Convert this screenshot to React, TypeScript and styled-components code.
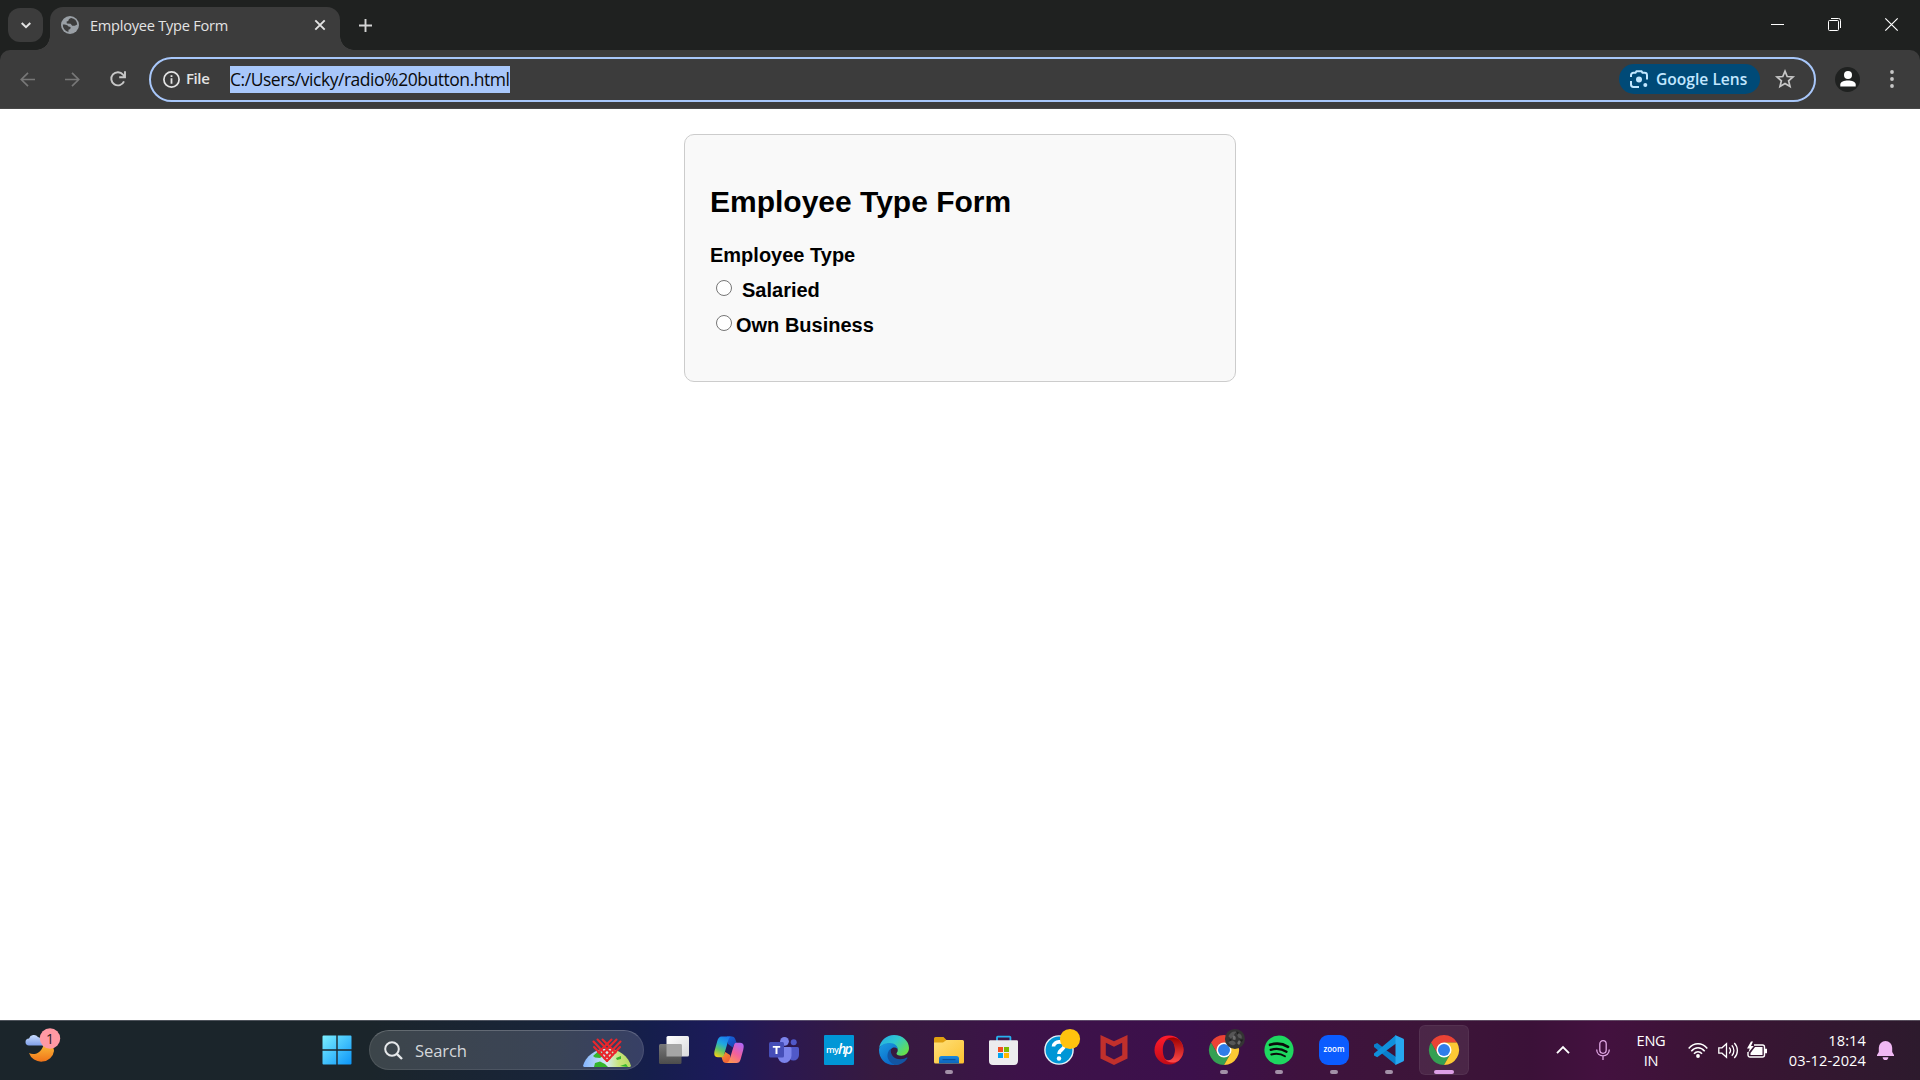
import React from "react";
import styled, { createGlobalStyle } from "styled-components";

const GlobalStyle = createGlobalStyle`
  * { box-sizing: border-box; }
  html, body { margin: 0; padding: 0; background: #fff; overflow: hidden; }
  svg { display: block; flex: none; overflow: visible; }
`;

const uiFont = `"Segoe UI", "Open Sans", "Noto Sans", sans-serif`;

const Screen = styled.div`
  width: 1920px;
  height: 1080px;
  display: flex;
  flex-direction: column;
  font-family: ${uiFont};
  overflow: hidden;
`;

/* ---------- Browser chrome ---------- */
const TabStrip = styled.div`
  height: 50px;
  flex: none;
  background: #1f2120;
  display: flex;
  align-items: flex-start;
  padding-left: 8px;
`;
const TabSearch = styled.div`
  width: 35px;
  height: 34px;
  margin-top: 8px;
  border-radius: 12px;
  background: #3c3c3c;
  display: flex;
  align-items: center;
  justify-content: center;
`;
const Tab = styled.div`
  position: relative;
  width: 290px;
  height: 43px;
  margin: 7px 0 0 7px;
  padding: 0 14px 7px 11px;
  border-radius: 13px 13px 0 0;
  background: #3c3c3c;
  display: flex;
  align-items: center;
  &::before, &::after {
    content: "";
    position: absolute;
    bottom: 0;
    width: 14px;
    height: 14px;
  }
  &::before {
    left: -14px;
    background: radial-gradient(circle at 0 0, transparent 13.5px, #3c3c3c 14px);
  }
  &::after {
    right: -14px;
    background: radial-gradient(circle at 100% 0, transparent 13.5px, #3c3c3c 14px);
  }
`;
const TabTitle = styled.span`
  flex: 1;
  margin-left: 11px;
  font-size: 14.6px;
  letter-spacing: -0.25px;
  color: #e3e3e3;
  white-space: nowrap;
`;
const NewTab = styled.div`
  width: 35px;
  height: 50px;
  margin-left: 8px;
  display: flex;
  align-items: center;
  justify-content: center;
`;
const WindowButtons = styled.div`
  display: flex;
  margin-left: auto;
`;
const WindowButton = styled.div`
  width: 57px;
  height: 49px;
  display: flex;
  align-items: center;
  justify-content: center;
`;
const ToolbarBack = styled.div`
  height: 59px;
  flex: none;
  background: #1f2120;
`;
const Toolbar = styled.div`
  height: 59px;
  padding: 7px 0 7px 5px;
  background: #3c3c3c;
  border-bottom: 1px solid #484848;
  border-radius: 10px 10px 0 0;
  display: flex;
  align-items: center;
`;
const ToolButton = styled.div<{ $w?: number }>`
  width: ${(p) => p.$w ?? 45}px;
  height: 44px;
  flex: none;
  display: flex;
  align-items: center;
  justify-content: center;
`;
const Omnibox = styled.div`
  width: 1667px;
  height: 45px;
  flex: none;
  margin-left: 9px;
  padding: 0 19px 0 12px;
  border: 2.5px solid #a8c7fa;
  border-radius: 23px;
  display: flex;
  align-items: center;
`;
const SchemeLabel = styled.span`
  margin: 0 0 2px 6px;
  width: 43px;
  font-size: 15px;
  font-weight: 600;
  letter-spacing: -0.4px;
  color: #e3e3e3;
`;
const Url = styled.span`
  height: 27px;
  width: 280px;
  margin-left: 1px;
  line-height: 27px;
  background: #a8c7fa;
  color: #0a0a0a;
  font-size: 17.5px;
  letter-spacing: -0.46px;
  white-space: nowrap;
`;
const LensChip = styled.div`
  width: 141px;
  height: 30px;
  margin-left: auto;
  padding-left: 11px;
  border-radius: 15px;
  background: #004a77;
  color: #c2e7ff;
  display: flex;
  align-items: center;
  gap: 8px;
  font-size: 15.6px;
  font-weight: 600;
  white-space: nowrap;
`;
const StarSlot = styled.div`
  margin-left: 15px;
`;
const Profile = styled.div`
  width: 25px;
  height: 25px;
  flex: none;
  margin-left: 19px;
  border-radius: 50%;
  background: #1f2120;
  display: flex;
  align-items: center;
  justify-content: center;
`;

/* ---------- Page ---------- */
const Page = styled.main`
  flex: 1;
  background: #fff;
  padding-top: 25px;
  font-family: Arial, "Liberation Sans", sans-serif;
  font-weight: 700;
  color: #000;
`;
const Card = styled.form`
  width: 552px;
  height: 248px;
  margin: 0 auto;
  padding: 49px 25px 0;
  border: 1px solid #ccc;
  border-radius: 10px;
  background: #f9f9f9;
`;
const Heading = styled.h2`
  margin: 0 0 18px;
  font-size: 30px;
  line-height: 35px;
`;
const GroupLabel = styled.div`
  height: 35px;
  line-height: 37px;
  font-size: 20px;
`;
const Option = styled.label<{ $gap: number }>`
  height: 35px;
  padding: 2px 0 0 6px;
  display: flex;
  align-items: center;
  gap: ${(p) => p.$gap}px;
  font-size: 20px;
`;
const Radio = styled.input`
  appearance: none;
  width: 16px;
  height: 16px;
  margin: 0 0 5px;
  border: 1px solid #767676;
  border-radius: 50%;
  background: #fff;
`;

/* ---------- Taskbar ---------- */
const Taskbar = styled.footer`
  height: 60px;
  flex: none;
  display: flex;
  align-items: center;
  padding-bottom: 1px;
  border-top: 1px solid rgba(130, 130, 140, 0.5);
  background: linear-gradient(90deg, #1b252b 0, #1b252b 370px, #18243a 560px, #151e4c 650px, #1c1a5a 720px,
    #2b1850 780px, #371a3f 880px, #381842 940px, #3d1249 1020px, #3c104b 1190px, #3e123e 1300px,
    #3c1538 1440px, #3b1138 1530px, #43113f 1600px, #3a1434 1720px, #2d1a2d 1920px) 0 0 / 1920px 100%;
`;
const WidgetButton = styled.div`
  width: 312px;
  flex: none;
  padding: 0 0 8px 25px;
`;
const TaskButton = styled.div<{ $active?: boolean }>`
  position: relative;
  width: 50px;
  height: 50px;
  flex: none;
  border-radius: 6px;
  display: flex;
  align-items: center;
  justify-content: center;
  background: ${(p) => (p.$active ? "rgba(255,255,255,0.08)" : "transparent")};
  box-shadow: ${(p) => (p.$active ? "inset 0 0 0 1px rgba(255,255,255,0.05)" : "none")};
`;
const Indicator = styled.span<{ $active?: boolean }>`
  position: absolute;
  bottom: 1px;
  left: 50%;
  transform: translateX(-50%);
  width: ${(p) => (p.$active ? 20 : 8)}px;
  height: 4px;
  border-radius: 2px;
  background: ${(p) => (p.$active ? "#dd9fe6" : "#a391a8")};
`;
const Apps = styled.div`
  display: flex;
  align-items: center;
  gap: 5px;
`;
const SearchBox = styled.div`
  width: 275px;
  height: 40px;
  flex: none;
  margin-left: 2px;
  padding: 0 12px 0 14px;
  border-radius: 20px;
  border: 1px solid rgba(255, 255, 255, 0.09);
  border-top-color: rgba(255, 255, 255, 0.2);
  background: rgba(255, 255, 255, 0.15);
  display: flex;
  align-items: center;
`;
const SearchText = styled.span`
  margin-left: 12px;
  flex: 1;
  font-size: 16.6px;
  letter-spacing: -0.1px;
  color: #d4d7da;
`;
const Tray = styled.div`
  margin-left: auto;
  display: flex;
  align-items: center;
  padding-right: 16px;
  color: #fff;
`;
const TraySlot = styled.div<{ $w: number }>`
  width: ${(p) => p.$w}px;
  display: flex;
  justify-content: center;
`;
const TrayText = styled.div<{ $w: number; $align: string; $track: number }>`
  width: ${(p) => p.$w}px;
  padding-bottom: 1px;
  text-align: ${(p) => p.$align};
  font-size: 14.6px;
  line-height: 20px;
  letter-spacing: ${(p) => p.$track}px;
  white-space: nowrap;
`;

/* ---------- Icons ---------- */
const Globe = () => (
  <svg width="18" height="18" viewBox="0 0 18 18">
    <circle cx="9" cy="9" r="9" fill="#9aa0a6" />
    <path d="M10.2 1.9 C8.4 2.5 7 3.7 7.4 5 L5.6 5.5 L5.8 7.6 L9.6 7.7 L11.2 9.7 L13.8 9.7 L16.2 8.4 A7.2 7.2 0 0 0 10.2 1.9Z M1.8 8.6 C3.8 8.5 6.8 9 7.5 10.5 L9.6 11 L9.3 13 L7.5 13.8 L7.4 16 A7.2 7.2 0 0 1 1.8 8.6Z" fill="#3c3c3c" />
  </svg>
);

const LensIcon = () => (
  <svg width="18" height="18" viewBox="0 0 18 18" fill="none" stroke="#c2e7ff" strokeWidth="2">
    <path d="M1 7 V5.2 A2.4 2.4 0 0 1 3.4 2.8 H5.5 L6.5 1.2 H11.5 L12.5 2.8 H14.6 A2.4 2.4 0 0 1 17 5.2 V9.5 M1 11 V14.6 A2.4 2.4 0 0 0 3.4 17 H9" />
    <circle cx="9" cy="9.6" r="3" fill="#c2e7ff" stroke="none" />
    <circle cx="15.3" cy="15" r="2" fill="#c2e7ff" stroke="none" />
  </svg>
);

const WeatherIcon = () => (
  <svg width="36" height="36" viewBox="0 0 36 36">
    <defs>
      <linearGradient id="moon" x1="0" y1="0" x2="0" y2="1"><stop offset="0" stopColor="#fcc43b" /><stop offset="1" stopColor="#f0741a" /></linearGradient>
      <linearGradient id="cloud" x1="0" y1="0" x2="0" y2="1"><stop offset="0" stopColor="#c8dcff" /><stop offset="1" stopColor="#7f9fe8" /></linearGradient>
    </defs>
    <path d="M4 25 C9 28 18 25 19 14 C26 15 29 19 29 23 A12.8 12 0 0 1 4 25Z" fill="url(#moon)" />
    <path d="M4 17.5 A3.5 3.5 0 0 1 4 10.5 A5.2 5.2 0 0 1 13 9 L20 12 V17.5Z" fill="url(#cloud)" />
    <circle cx="25" cy="10.5" r="10.2" fill="#ff99a4" />
    <text x="25" y="15.8" fontSize="14" textAnchor="middle" fill="#2b1b1f" fontFamily="Open Sans, sans-serif">1</text>
  </svg>
);

const WindowsIcon = () => (
  <svg width="30" height="30" viewBox="0 0 30 30">
    <defs><linearGradient id="win" x1="0" y1="0" x2="30" y2="30" gradientUnits="userSpaceOnUse"><stop offset="0" stopColor="#7df0ff" /><stop offset="1" stopColor="#0a94f8" /></linearGradient></defs>
    <path d="M.5 1.5 A1 1 0 0 1 1.5 .5 H14.3 V14.3 H.5Z M15.7 .5 H28.5 A1 1 0 0 1 29.5 1.5 V14.3 H15.7Z M.5 15.7 H14.3 V29.5 H1.5 A1 1 0 0 1 .5 28.5Z M15.7 15.7 H29.5 V28.5 A1 1 0 0 1 28.5 29.5 H15.7Z" fill="url(#win)" />
  </svg>
);

const HighlightArt = () => (
  <svg width="48" height="40" viewBox="0 0 48 40">
    <defs>
      <clipPath id="earth"><path d="M0 36 C2 27 12 18.5 24 18.5 S46 27 48 36 L47 37 H1Z" /></clipPath>
      <linearGradient id="sea" x1="0" x2="1" y1="0" y2="0"><stop offset="0" stopColor="#83b4ff" /><stop offset=".5" stopColor="#d4ecf0" /><stop offset=".75" stopColor="#c9e47a" /><stop offset="1" stopColor="#b5d862" /></linearGradient>
    </defs>
    <g clipPath="url(#earth)">
      <rect width="48" height="40" fill="url(#sea)" />
      <path d="M10 26 L15 21.5 L18 22 L20 26 L17 28 L12 27.5Z M11 37 L12 33 L17 31.5 L22 34 L25 37Z M33 28 L38 26 L38 29 L34 30Z M37 36 L43 34 L45 37Z" fill="#35b52b" />
    </g>
    <g stroke="#e9262c" strokeWidth="2.1" fill="none" strokeLinecap="round">
      <path d="M11 17 L24 31 M10.5 11.5 L26.5 28.5 M14.5 9.5 L29.5 25 M19.5 9.5 L32.5 22.5" />
      <path d="M37 17 L24 31 M37.5 11.5 L21.5 28.5 M33.5 9.5 L18.5 25 M28.5 9.5 L15.5 22.5" />
    </g>
  </svg>
);

const TaskViewIcon = () => (
  <svg width="30" height="30" viewBox="0 0 30 30">
    <defs>
      <linearGradient id="tv1" x1="0" y1="0" x2="1" y2="1"><stop offset="0" stopColor="#fff" /><stop offset="1" stopColor="#d9d9dc" /></linearGradient>
      <linearGradient id="tv2" x1="0" y1="0" x2="0" y2="1"><stop offset="0" stopColor="#797979" /><stop offset="1" stopColor="#4c4c4c" /></linearGradient>
    </defs>
    <rect x="7.5" y="1" width="22.5" height="20.5" rx="1.5" fill="url(#tv1)" />
    <rect x="0" y="9" width="22.5" height="20" rx="1.5" fill="url(#tv2)" />
    <rect x="7.5" y="9" width="15" height="12.5" fill="#a6a6a6" />
  </svg>
);

const CopilotIcon = () => (
  <svg width="30" height="30" viewBox="0 0 30 30">
    <defs>
      <linearGradient id="cpA" x1=".6" y1="0" x2=".2" y2="1"><stop offset="0" stopColor="#1a7df0" /><stop offset=".35" stopColor="#20a8e0" /><stop offset=".65" stopColor="#5cc56a" /><stop offset="1" stopColor="#f4cf16" /></linearGradient>
      <linearGradient id="cpB" x1=".8" y1="0" x2=".2" y2="1"><stop offset="0" stopColor="#b366f5" /><stop offset=".5" stopColor="#f2609c" /><stop offset="1" stopColor="#ff9a4c" /></linearGradient>
      <linearGradient id="cpC" x1="0" y1="0" x2="1" y2="1"><stop offset="0" stopColor="#1467e0" /><stop offset="1" stopColor="#1c3ca8" /></linearGradient>
      <linearGradient id="cpD" x1="0" y1="0" x2="1" y2="1"><stop offset="0" stopColor="#f5a030" /><stop offset="1" stopColor="#ef5138" /></linearGradient>
    </defs>
    <path d="M13 1.5 H18 C21 1.5 21.5 5 22.5 7.5 H25 C21 7.5 20 9 18.8 12.5 L14 9Z" fill="url(#cpC)" />
    <path d="M17 28 H12 C9 28 8.5 25 7.5 22 H5 C9 22 10 20 11.2 17 L16 20Z" fill="url(#cpD)" />
    <path d="M7.5 1.5 H18 C15.5 1.5 14.8 3.5 14 6.2 L10 20 C9.4 22 8.3 22.2 6.5 22.2 H4 C-.5 22.2 0 17.8 .8 15 L3.3 6 C4.2 3 5.4 1.5 7.5 1.5Z" fill="url(#cpA)" />
    <path d="M22.5 28 H12 C14.5 28 15.2 26 16 23.3 L20 10 C20.6 8 21.7 7.8 23.5 7.8 H26 C30.5 7.8 30 12 29.2 15 L26.7 24 C25.8 27 24.6 28 22.5 28Z" fill="url(#cpB)" />
  </svg>
);

const TeamsIcon = () => (
  <svg width="30" height="30" viewBox="0 0 30 30">
    <circle cx="24.7" cy="7.3" r="3" fill="#5059c9" />
    <path d="M19 12 H28.5 A1.5 1.5 0 0 1 30 13.5 V20 A5.5 5.5 0 0 1 19 20Z" fill="#5059c9" />
    <circle cx="15.5" cy="6.3" r="4.4" fill="#7b83eb" />
    <path d="M9 12 H21 A1.5 1.5 0 0 1 22.5 13.5 V20.5 A7 7.5 0 0 1 8.5 20.5Z" fill="#7b83eb" />
    <rect x="0" y="7" width="15" height="15.5" rx="1.5" fill="#464eb8" />
    <path d="M3.8 11 H11.2 V12.8 H8.5 V19 H6.5 V12.8 H3.8Z" fill="#fff" />
  </svg>
);

const HpIcon = () => (
  <svg width="30" height="30" viewBox="0 0 30 30">
    <rect width="30" height="30" rx="1" fill="#0096d6" />
    <text x="2" y="18.2" fontSize="9" fill="#fff" fontFamily="Open Sans, sans-serif" letterSpacing="-.6" fontWeight="600">my</text>
    <text x="14" y="19" fontSize="14" fill="#fff" fontFamily="Open Sans, sans-serif" fontStyle="italic" fontWeight="600" letterSpacing="-1.8">hp</text>
  </svg>
);

const EdgeIcon = () => (
  <svg width="30" height="30" viewBox="0 0 24 24">
    <defs>
      <linearGradient id="eg1" x1="0" y1="0" x2="1" y2=".7"><stop offset="0" stopColor="#22a7e8" /><stop offset=".5" stopColor="#30c8d0" /><stop offset="1" stopColor="#67df4a" /></linearGradient>
      <linearGradient id="eg2" x1="0" y1="0" x2=".6" y2="1"><stop offset="0" stopColor="#1b9de2" /><stop offset="1" stopColor="#0a68c8" /></linearGradient>
    </defs>
    <path d="M.1 10.5 C.8 4.5 6 0 12 0 C19 0 24 5 24 10.4 C24 14.3 21 16.6 17.8 16.6 C15 16.6 14 15.4 14 14.8 C14 14.3 15 13.8 15 12 C15 9.3 12 7 8.5 7 C4 7 .8 9 .1 10.5Z" fill="url(#eg1)" />
    <path d="M0 12 C0 8.5 4 6.3 8.5 6.3 C12.8 6.3 15 9 15 11.6 C14 10 12 9.6 10.6 10.4 C7 12.5 7 19 13 23.9 C5 24.6 0 19 0 12Z" fill="url(#eg2)" />
    <path d="M9.6 11 C8.6 15.6 12 19.4 17 19.4 C19.5 19.4 21 18.6 22.3 18 C22.8 17.8 23 18.1 22.7 18.5 C20.5 22 17 24 13 24 C8.5 22.5 6.6 19 6.8 16 C7 13.3 8.5 11.5 9.6 11Z" fill="#1355a3" />
  </svg>
);

const ExplorerIcon = () => (
  <svg width="30" height="30" viewBox="0 0 30 30">
    <defs>
      <linearGradient id="fold" x1="0" y1="0" x2="1" y2="1"><stop offset="0" stopColor="#ffe07a" /><stop offset="1" stopColor="#fcc12f" /></linearGradient>
      <linearGradient id="tray" x1="0" y1="0" x2="0" y2="1"><stop offset="0" stopColor="#1a8ae0" /><stop offset="1" stopColor="#0b62ba" /></linearGradient>
    </defs>
    <path d="M0 3.5 A1.5 1.5 0 0 1 1.5 2 H9.5 L12.5 5 H28.5 V12 H0Z" fill="#e0a010" />
    <path d="M0 7.5 H9 L12.5 5 H28.5 A1.5 1.5 0 0 1 30 6.5 V27 A1.5 1.5 0 0 1 28.5 28.5 H1.5 A1.5 1.5 0 0 1 0 27Z" fill="url(#fold)" />
    <path d="M5 28.5 V23.5 A2.5 2.5 0 0 1 7.5 21 H22.5 A2.5 2.5 0 0 1 25 23.5 V28.5Z" fill="url(#tray)" />
    <path d="M8.5 24.7 H21.5" stroke="#084b94" strokeWidth="1" />
  </svg>
);

const StoreIcon = () => (
  <svg width="30" height="30" viewBox="0 0 30 30">
    <path d="M8 6 V2.4 A.7 .7 0 0 1 8.7 1.7 H20.7 A.7 .7 0 0 1 21.4 2.4 V6" fill="none" stroke="#28b1ef" strokeWidth="1.8" />
    <path d="M0 6.5 A1.2 1.2 0 0 1 1.2 5.3 H27.8 A1.2 1.2 0 0 1 29 6.5 V26 A4 4 0 0 1 25 30 H4 A4 4 0 0 1 0 26Z" fill="#ececee" />
    <path d="M9 12 H14 V17 H9Z" fill="#f25022" /><path d="M15 12 H20 V17 H15Z" fill="#7fba00" />
    <path d="M9 18 H14 V23 H9Z" fill="#00a4ef" /><path d="M15 18 H20 V23 H15Z" fill="#ffb900" />
  </svg>
);

const HelpIcon = () => (
  <svg width="30" height="30" viewBox="0 0 30 30">
    <circle cx="15" cy="15" r="14.8" fill="#e9f3f8" />
    <circle cx="15" cy="15" r="13.4" fill="#0096d6" />
    <path d="M9.5 11.5 C9.5 6 20.5 5 20.5 10.5 C20.5 14.5 15 14.5 15 19" fill="none" stroke="#fff" strokeWidth="3.6" />
    <circle cx="15" cy="23.5" r="2.2" fill="#fff" />
    <circle cx="26" cy="4" r="10.1" fill="#ffc20e" />
  </svg>
);

const McAfeeIcon = () => (
  <svg width="30" height="30" viewBox="0 0 30 30">
    <path d="M1.5 0 L15 6.3 L28.5 0 V23.5 L15 30 L1.5 23.5Z M6.8 7.8 V20.3 L15 24.5 L23.2 20.3 V7.8 L15 11.8Z" fill="#c0302c" fillRule="evenodd" />
  </svg>
);

const OperaIcon = () => (
  <svg width="30" height="30" viewBox="0 0 30 30">
    <defs>
      <linearGradient id="op" x1="0" y1="0" x2="0" y2="1"><stop offset="0" stopColor="#ff1b2d" /><stop offset="1" stopColor="#c20b16" /></linearGradient>
      <linearGradient id="op2" x1="0" y1="0" x2="0" y2="1"><stop offset="0" stopColor="#9c0000" /><stop offset="1" stopColor="#ff4b4b" /></linearGradient>
    </defs>
    <path d="M15 .6 A14.5 14.4 0 1 0 15 29.4 A14.5 14.4 0 1 0 15 .6Z M15 4.2 C18.8 4.2 21 9 21 15 S18.8 25.8 15 25.8 S8.8 21 8.8 15 S11.2 4.2 15 4.2Z" fill="url(#op)" fillRule="evenodd" />
    <path d="M10.8 6.3 C13 2.5 19 1 24.7 4.3 A14.5 14.4 0 0 1 24.7 25.7 C19 29 13 27.5 10.8 23.7 C16 28 21 23 21 15 S16 2 10.8 6.3Z" fill="url(#op2)" />
  </svg>
);

const ChromeIcon = ({ avatar }: { avatar?: boolean }) => (
  <svg width="30" height="30" viewBox="0 0 48 48">
    <path d="M24 12 H44.8 A24 24 0 0 0 3.2 12 L13.6 30Z" fill="#ea4335" />
    <path d="M13.6 30 L3.2 12 A24 24 0 0 0 24 48 L34.4 30Z" fill="#34a053" />
    <path d="M34.4 30 L24 48 A24 24 0 0 0 44.8 12 H24Z" fill="#fcc934" />
    <circle cx="24" cy="24" r="12" fill="#fff" />
    <circle cx="24" cy="24" r="9.6" fill="#2f7de9" />
    {avatar && (
      <g>
        <circle cx="41.5" cy="6.2" r="16" fill="#343434" />
        <path d="M31 2 C34 -5 40 -7 44 -5 C40 -2 39 3 35 6Z M44 -2 C50 -4 54 1 52 6 L47 4Z M31 12 C35 7 40 8 43 13 C40 18 35 17 31 12Z" fill="#565656" />
        <path d="M38 1 C42 0 44 4 42 8 L38 7Z M47 9 C51 8 52 12 48 16 L45 13Z" fill="#6c6c6c" />
        <path d="M44 -6 L48 -4 L45 0Z M49 7 L55 7 L52 11Z M33 6 L37 8 L33 10Z" fill="#1f1f1f" />
      </g>
    )}
  </svg>
);

const SpotifyIcon = () => (
  <svg width="30" height="30" viewBox="0 0 30 30">
    <circle cx="15" cy="15" r="14.6" fill="#1ed760" />
    <g fill="none" stroke="#0a0a0a" strokeLinecap="round">
      <path d="M6 9.8 C12 8 19 8.7 24 11.8" strokeWidth="2.7" />
      <path d="M6.7 14.8 C12 13.3 18 14 22.5 16.7" strokeWidth="2.3" />
      <path d="M7.3 19.5 C12 18.3 17 18.8 21 21.2" strokeWidth="1.9" />
    </g>
  </svg>
);

const ZoomIcon = () => (
  <svg width="30" height="30" viewBox="0 0 30 30">
    <rect width="30" height="30" rx="9" fill="#0b5cff" />
    <text x="15" y="17.3" fontSize="8.2" textAnchor="middle" textLength="21" lengthAdjust="spacingAndGlyphs" fill="#fff" fontWeight="600" fontFamily="Open Sans, sans-serif">zoom</text>
  </svg>
);

const CodeIcon = () => (
  <svg width="30" height="30" viewBox="0 0 30 30">
    <path d="M22 0 L8.8 12.2 L3.2 8 L0 9.5 V12 L22 30 V22 L12 15 L22 7.8Z" fill="#0a7fcc" />
    <path d="M0 18.5 L22 .3 V8.5 L3.2 22.3 L0 20.6Z" fill="#1090dc" />
    <path d="M21.5 .2 L29 3.5 A1.6 1.6 0 0 1 30 5 V25 A1.6 1.6 0 0 1 29 26.5 L21.5 30Z" fill="#27a7f0" />
  </svg>
);

const apps: { icon: React.ReactNode; running?: boolean; active?: boolean }[] = [
  { icon: <TaskViewIcon /> },
  { icon: <CopilotIcon /> },
  { icon: <TeamsIcon /> },
  { icon: <HpIcon /> },
  { icon: <EdgeIcon /> },
  { icon: <ExplorerIcon />, running: true },
  { icon: <StoreIcon /> },
  { icon: <HelpIcon /> },
  { icon: <McAfeeIcon /> },
  { icon: <OperaIcon /> },
  { icon: <ChromeIcon avatar />, running: true },
  { icon: <SpotifyIcon />, running: true },
  { icon: <ZoomIcon />, running: true },
  { icon: <CodeIcon />, running: true },
  { icon: <ChromeIcon />, running: true, active: true },
];

const WinControls = () => (
  <WindowButtons>
    <WindowButton>
      <svg width="13" height="13" viewBox="0 0 13 13"><path d="M0 6.5 H13" stroke="#fff" /></svg>
    </WindowButton>
    <WindowButton>
      <svg width="13" height="13" viewBox="0 0 13 13" fill="none" stroke="#fff">
        <path d="M3 .5 H10.5 A2 2 0 0 1 12.5 2.5 V10" />
        <rect x=".5" y="2.5" width="10" height="10" rx="1" />
      </svg>
    </WindowButton>
    <WindowButton>
      <svg width="13" height="13" viewBox="0 0 13 13"><path d="M.3 .3 L12.7 12.7 M12.7 .3 L.3 12.7" stroke="#fff" strokeWidth="1.2" /></svg>
    </WindowButton>
  </WindowButtons>
);

export default function App() {
  return (
    <Screen>
      <GlobalStyle />
      <TabStrip>
        <TabSearch>
          <svg width="10" height="7" viewBox="0 0 10 7"><path d="M.7 1 L5 5.2 L9.3 1" fill="none" stroke="#e3e3e3" strokeWidth="2" /></svg>
        </TabSearch>
        <Tab>
          <Globe />
          <TabTitle>Employee Type Form</TabTitle>
          <svg width="12" height="12" viewBox="0 0 12 12"><path d="M1.3 1.3 L10.7 10.7 M10.7 1.3 L1.3 10.7" stroke="#e3e3e3" strokeWidth="1.9" /></svg>
        </Tab>
        <NewTab>
          <svg width="13" height="13" viewBox="0 0 13 13"><path d="M6.5 0 V13 M0 6.5 H13" stroke="#d4d4d4" strokeWidth="1.9" /></svg>
        </NewTab>
        <WinControls />
      </TabStrip>
      <ToolbarBack>
        <Toolbar>
          <ToolButton>
            <svg width="15" height="15" viewBox="0 0 15 15"><path d="M15 7.5 H1.5 M8 .8 L1.3 7.5 L8 14.2" fill="none" stroke="#777" strokeWidth="1.7" /></svg>
          </ToolButton>
          <ToolButton>
            <svg width="15" height="15" viewBox="0 0 15 15"><path d="M0 7.5 H13.5 M7 .8 L13.7 7.5 L7 14.2" fill="none" stroke="#777" strokeWidth="1.7" /></svg>
          </ToolButton>
          <ToolButton>
            <svg width="16" height="16" viewBox="0 0 16 16"><path d="M14 10.3 A6.6 6.6 0 1 1 13 3.6 L14.6 5.4 M15 .3 V6.2 H9.2" fill="none" stroke="#c7c7c7" strokeWidth="1.9" /></svg>
          </ToolButton>
          <Omnibox>
            <svg width="17" height="17" viewBox="0 0 17 17">
              <circle cx="8.5" cy="8.5" r="7.6" fill="none" stroke="#e3e3e3" strokeWidth="1.7" />
              <path d="M8.5 7.3 V12.8 M8.5 4.2 V6" stroke="#e3e3e3" strokeWidth="1.8" />
            </svg>
            <SchemeLabel>File</SchemeLabel>
            <Url>C:/Users/vicky/radio%20button.html</Url>
            <LensChip>
              <LensIcon />
              Google Lens
            </LensChip>
            <StarSlot>
              <svg width="20" height="20" viewBox="0 0 20 20"><path d="M10 2.2 L12.2 7.5 L18 8 L13.6 11.8 L15 17.4 L10 14.4 L5 17.4 L6.4 11.8 L2 8 L7.8 7.5Z" fill="none" stroke="#c7c7c7" strokeWidth="1.7" /></svg>
            </StarSlot>
          </Omnibox>
          <Profile>
            <svg width="16" height="16" viewBox="0 0 16 16" fill="#fff"><circle cx="8" cy="4" r="4" /><path d="M.3 15.5 V13.5 C.3 8.3 15.7 8.3 15.7 13.5 V15.5Z" /></svg>
          </Profile>
          <ToolButton $w={64}>
            <svg width="4" height="18" viewBox="0 0 4 18" fill="#c7c7c7"><circle cx="2" cy="2" r="1.9" /><circle cx="2" cy="9" r="1.9" /><circle cx="2" cy="16" r="1.9" /></svg>
          </ToolButton>
        </Toolbar>
      </ToolbarBack>

      <Page>
        <Card>
          <Heading>Employee Type Form</Heading>
          <GroupLabel>Employee Type</GroupLabel>
          <Option $gap={10}>
            <Radio type="radio" name="employeeType" />
            Salaried
          </Option>
          <Option $gap={4}>
            <Radio type="radio" name="employeeType" />
            Own Business
          </Option>
        </Card>
      </Page>

      <Taskbar>
        <WidgetButton><WeatherIcon /></WidgetButton>
        <Apps>
          <TaskButton><WindowsIcon /></TaskButton>
          <SearchBox>
            <svg width="19" height="19" viewBox="0 0 19 19" fill="none" stroke="#e6e8ea" strokeWidth="2"><circle cx="8" cy="8" r="6.8" /><path d="M12.8 12.8 L18 18" strokeWidth="2.4" /></svg>
            <SearchText>Search</SearchText>
            <HighlightArt />
          </SearchBox>
          {apps.map((app, i) => (
            <TaskButton key={i} $active={app.active}>
              {app.icon}
              {app.running && <Indicator $active={app.active} />}
            </TaskButton>
          ))}
        </Apps>
        <Tray>
          <TraySlot $w={40}>
            <svg width="14" height="8" viewBox="0 0 14 8"><path d="M1 7.2 L7 1.2 L13 7.2" fill="none" stroke="#fff" strokeWidth="1.9" /></svg>
          </TraySlot>
          <TraySlot $w={40}>
            <svg width="14" height="20" viewBox="0 0 14 20" fill="none" stroke="#dfa5e2" strokeWidth="1.3"><rect x="3.8" y=".7" width="6.4" height="12.6" rx="3.2" /><path d="M.7 9.5 C.7 18 13.3 18 13.3 9.5 M7 16 V20" /></svg>
          </TraySlot>
          <TrayText $w={56} $align="center" $track={-0.3}>ENG<br />IN</TrayText>
          <TraySlot $w={37}>
            <svg width="20" height="15" viewBox="0 0 20 15" fill="none" stroke="#fff" strokeWidth="1.5"><path d="M.7 5.5 C6 -.7 14 -.7 19.3 5.5 M3.3 8.2 C7.3 3.6 12.7 3.6 16.7 8.2 M6 10.8 C8.3 8 11.7 8 14 10.8" /><circle cx="10" cy="13" r="1.9" fill="#fff" stroke="none" /></svg>
          </TraySlot>
          <TraySlot $w={24}>
            <svg width="20" height="17" viewBox="0 0 20 17" fill="none" stroke="#fff" strokeWidth="1.3"><path d="M.8 5.8 H4 L8.5 1.8 V15.2 L4 11.2 H.8Z M11.2 5.5 C12.8 7.3 12.8 9.7 11.2 11.5 M13.8 3.2 C16.6 6.2 16.6 10.8 13.8 13.8 M16.3 1 C20.4 5.2 20.4 11.8 16.3 16" /></svg>
          </TraySlot>
          <TraySlot $w={34}>
            <svg width="20" height="16" viewBox="0 0 20 16"><path d="M7 3 H15.5 A2 2 0 0 1 17.5 5 V13 A2 2 0 0 1 15.5 15 H3 A2 2 0 0 1 1 13 V10" fill="none" stroke="#fff" strokeWidth="1.4" /><path d="M18 6.8 H20 V11.2 H18Z M8 5 H15.5 V13 H3.5 V11Z M4 -.5 L0 6.5 H2.7 L1.2 11 L6.8 4 H4 L6 -.5Z" fill="#fff" /></svg>
          </TraySlot>
          <TrayText $w={92} $align="right" $track={0.1}>18:14<br />03-12-2024</TrayText>
          <TraySlot $w={38}>
            <svg width="17" height="19" viewBox="0 0 17 19" fill="#f0b8f3"><path d="M8.5 0 A6.7 6.7 0 0 1 15.2 6.7 V11 L17 14 V15 H0 V14 L1.8 11 V6.7 A6.7 6.7 0 0 1 8.5 0Z M5.6 16.2 H11.4 C11 20 6 20 5.6 16.2Z" /></svg>
          </TraySlot>
        </Tray>
      </Taskbar>
    </Screen>
  );
}
